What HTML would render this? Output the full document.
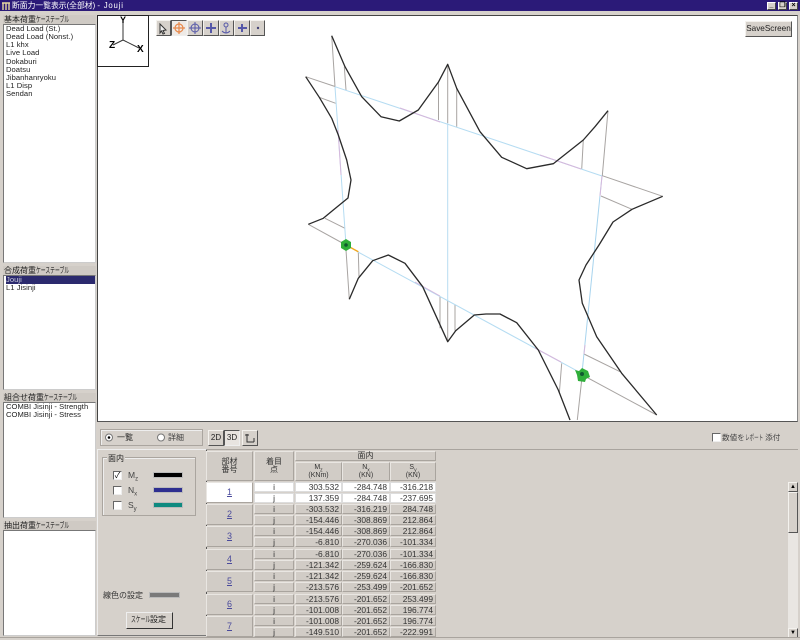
<!DOCTYPE html>
<html><head><meta charset="utf-8"><style>
html,body{margin:0;padding:0;width:800px;height:640px;overflow:hidden;background:#d6d1cb}
body{position:relative;font-family:"Liberation Sans","Noto Sans CJK JP",sans-serif;font-size:9px;color:#222;filter:blur(.3px)}
div{position:absolute;box-sizing:border-box;white-space:nowrap}
.k{display:inline-block;transform:scaleX(.6);transform-origin:left center}
.title{left:0;top:0;width:800px;height:11px;background:#2b1a78;color:#fff;font-size:7.8px;line-height:11px;padding-left:12px}
.wb{top:2px;width:9px;height:8px;background:#d6d1cb;border:1px solid;border-color:#fff #444 #444 #fff;font-size:7px;line-height:6px;text-align:center;color:#000;font-weight:bold}
.hd{left:3px;width:93px;height:9px;background:#cfcac4;font-size:8px;line-height:9px;padding-left:1px;color:#222}
.ls{left:3px;width:93px;background:#fff;border:1px solid;border-color:#777 #ccc #ccc #777;font-size:7.6px;line-height:8.15px;letter-spacing:.05px;padding:0 0 0 2px;overflow:hidden}
.ls span{display:block;height:8.15px}
.btn{background:#d6d1cb;border:1px solid;border-color:#f4f2ee #555 #555 #f4f2ee;text-align:center}
.grp{border:1px solid #aaa59f;box-shadow:inset 1px 1px 0 #eee}
.cb{width:9px;height:9px;background:#fff;border:1px solid;border-color:#666 #eee #eee #666;font-size:8px;line-height:7px;text-align:center;color:#000}
.c{height:10px;background:#d1ccc6;border:1px solid;border-color:#e9e6e2 #a9a49e #a9a49e #e9e6e2;font-size:8.4px;line-height:8.5px;text-align:right;padding-right:2px;color:#333}
.c.w{background:#fff;border-color:#ddd}
.c.m{text-align:center;padding:0}
.n{left:206px;width:47px;height:21px;background:#d1ccc6;border:1px solid;border-color:#e9e6e2 #a9a49e #a9a49e #e9e6e2;color:#4a4a9c;text-align:center;line-height:19px;font-size:9px;text-decoration:underline}
.h{background:#d1ccc6;border:1px solid;border-color:#e9e6e2 #a9a49e #a9a49e #e9e6e2;text-align:center;font-size:8px;line-height:8px;color:#333}
.sw{height:6px;left:153px;width:30px;border:1px solid #bbb}
svg{position:absolute}
</style></head><body>
<div class="title">断面力一覧表示(全部材) <span style="letter-spacing:.8px">- Jouji</span></div>
<svg style="left:1px;top:1px" width="10" height="10"><path d="M1 2h8M2 2v7M8 2v7M5 2v7" stroke="#e8d8a0" stroke-width="1.4" fill="none"/></svg>
<div class="wb" style="left:767px">_</div><div class="wb" style="left:778px">❐</div><div class="wb" style="left:789px">×</div>

<div class="hd" style="top:15px">基本荷重<span class="k">ケーステーブル</span></div>
<div class="ls" style="top:24px;height:239px"><span>Dead Load (St.)</span><span>Dead Load (Nonst.)</span><span>L1 khx</span><span>Live Load</span><span>Dokaburi</span><span>Doatsu</span><span>Jibanhanryoku</span><span>L1 Disp</span><span>Sendan</span></div>
<div class="hd" style="top:266px">合成荷重<span class="k">ケーステーブル</span></div>
<div class="ls" style="top:275px;height:115px"><span style="background:#2b2a6e;color:#ccd">Jouji</span><span>L1 Jisinji</span></div>
<div class="hd" style="top:393px">組合せ荷重<span class="k">ケーステーブル</span></div>
<div class="ls" style="top:402px;height:116px"><span>COMBI Jisinji - Strength</span><span>COMBI Jisinji - Stress</span></div>
<div class="hd" style="top:521px">抽出荷重<span class="k">ケーステーブル</span></div>
<div class="ls" style="top:530px;height:106px"></div>

<div style="left:97px;top:15px;width:701px;height:407px;background:#fff;border:1px solid;border-color:#444 #888 #555 #444"></div>
<div style="left:97px;top:15px;width:52px;height:52px;background:#fff;border:1px solid #222"></div>
<svg style="left:97px;top:15px" width="52" height="52"><path d="M26 25V5M26 25L42 33M26 25L16 30" stroke="#333" fill="none"/><text x="23" y="8" font-size="9" font-weight="bold" font-family="Liberation Sans" fill="#000">Y</text><text x="40" y="37" font-size="10" font-weight="bold" font-family="Liberation Sans" fill="#000">X</text><text x="12" y="33" font-size="10" font-weight="bold" font-family="Liberation Sans" fill="#000">Z</text></svg>

<svg style="left:0;top:0" width="800" height="422" fill="none" stroke-linejoin="round">
<g stroke="#a8a4a2" stroke-width="1">
<path d="M331.7 35.7L335 86.7M305.7 76.7L335 86.5M319.3 97.3L335.7 103.3M344.3 66.7L346 90M438.5 82.3V120M447.7 64.3V123M456.7 88.3V126.7M583.3 140L581.7 169.3M608 110.7L602.3 175.7L662.7 196.3M632 209.3L601 196M308.3 224.3L346 245M325 218.3L345 228.3M346 250L349.3 299.3M358.3 251.7L359 276.7M440 296.7V328.3M447.7 300.7V341.7M455 305V330.7M561.7 363.3L559.3 393.3M584 354L620 371.7M588 378L656.7 415M581.7 380L577.3 420"/>
</g>
<path d="M335 86.7L480 135L602 176" stroke="#b5dcf2"/>
<path d="M400 108L440 122M540 155L581 169" stroke="#d6b8dc"/>
<path d="M335 87L346 245" stroke="#b5dcf2"/><path d="M338 130L341 175" stroke="#d6b8dc"/>
<path d="M447.7 123V300.7" stroke="#b8dcf2"/>
<path d="M602 176L582 373" stroke="#a8d4ee"/><path d="M602 176L600 196M585 345L584 354" stroke="#d6b8dc"/>
<path d="M358 252L576.7 370.7" stroke="#b5dcf2"/><path d="M415 282L440 296M535 348L561 362" stroke="#d6b8dc"/>
<path d="M346 245L358.3 251.7" stroke="#f0a820" stroke-width="1.4"/>
<g stroke="#2a2a2a" stroke-width="1.3">
<path d="M331.7 35.7L345 66.7L361.7 96.7L381 116.7L399.3 121L418.3 110L438.3 82.3L447.7 64.3L456.7 88.3L480 131.7L501.7 157.3L526.7 168.7L553.3 163.7L583.3 140L595 126.7L608 110.7"/>
<path d="M662.7 196.3L632 209.3L613 222L599 245L586 265L579 280L582.3 303.3L596.7 336.7L621.7 373.3L656.7 415"/>
<path d="M305.7 76.7L319.3 97.3L331.7 118.3L338.3 135L346.7 160L351 180L348 198L333.3 210L323.3 218.3L308.3 224.3"/>
<path d="M349.3 299.3L358.3 278.3L372.7 260.7L388.3 255L405 263.3L422.7 286.7L447.7 341.7L455.7 330.7L474.3 315L486 314L500 314L516.7 322.7L538.3 350L558.3 390L570 420"/>
</g>
<path d="M346 239l5 3v6l-5 3l-5-3v-6z" fill="#2fae3a"/><circle cx="346" cy="245" r="1.8" fill="#0f5a30"/>
<path d="M575 370l4 1l3-3l6 3l2 6l-4 2l-1 3l-7-1l-1-6z" fill="#2fae3a"/><circle cx="582" cy="374" r="2" fill="#0f5a30"/>
</svg>

<div class="btn" style="left:156px;top:20px;width:15px;height:16px"></div>
<div class="btn" style="left:171px;top:20px;width:16px;height:16px;background:#eeeae6;border-color:#555 #eee #eee #555"></div>
<div class="btn" style="left:187px;top:20px;width:16px;height:16px"></div>
<div class="btn" style="left:203px;top:20px;width:16px;height:16px"></div>
<div class="btn" style="left:219px;top:20px;width:15px;height:16px"></div>
<div class="btn" style="left:234px;top:20px;width:16px;height:16px"></div>
<div class="btn" style="left:250px;top:20px;width:15px;height:16px"></div>
<svg style="left:156px;top:20px" width="110" height="16" fill="none">
<path d="M4 4l6 6l-3 .5l1.5 3l-1.5 .5l-1.5-3l-1.5 2z" stroke="#333" fill="#eee"/>
<g stroke="#e8884a" stroke-width="1.2"><circle cx="23" cy="8" r="4"/><path d="M23 2v12M17 8h12"/></g>
<g stroke="#5558a8"><circle cx="39" cy="8" r="4"/><path d="M39 2v12M33 8h12"/><path d="M55 3v10M50 8h10" stroke-width="2"/><circle cx="70" cy="5" r="2"/><path d="M70 7v6M66 11q4 4 8 0"/><path d="M82 8h9M86 4v8" stroke-width="2"/></g>
<circle cx="102" cy="8" r="1.2" fill="#447"/>
</svg>
<div class="btn" style="left:745px;top:21px;width:47px;height:16px;line-height:13px;font-size:8.2px">SaveScreen</div>

<div style="left:97px;top:421px;width:701px;height:29px;border-bottom:1px solid #a9a49e"></div>
<div class="grp" style="left:100px;top:429px;width:103px;height:17px"></div>
<svg style="left:100px;top:429px" width="70" height="17"><circle cx="9" cy="8.5" r="3.5" fill="#fff" stroke="#777"/><circle cx="9" cy="8.5" r="1.3" fill="#000"/><circle cx="61" cy="8.5" r="3.5" fill="#fff" stroke="#777"/></svg>
<div style="left:117px;top:432px;font-size:8px;line-height:11px;letter-spacing:0">一覧</div>
<div style="left:168px;top:432px;font-size:8px;line-height:11px;color:#444">詳細</div>
<div class="btn" style="left:208px;top:430px;width:16px;height:16px;line-height:13px;font-size:8px">2D</div>
<div class="btn" style="left:224px;top:430px;width:16px;height:16px;line-height:14px;font-size:8px;background:#e8e4e0;border-color:#555 #eee #eee #555">3D</div>
<div class="btn" style="left:242px;top:430px;width:16px;height:16px"></div>
<svg style="left:242px;top:430px" width="16" height="16" fill="none"><path d="M5 4v8h7M3 5h4M12 8v4" stroke="#333"/></svg>
<div class="cb" style="left:712px;top:433px"></div>
<div style="left:722px;top:432px;font-size:7.6px;line-height:11px;color:#444">数値を<span class="k" style="margin-right:-10px">レポート</span>添付</div>

<div style="left:97px;top:449px;width:110px;height:187px;border:1px solid;border-color:#eee #555 #777 #eee"></div>
<div class="grp" style="left:102px;top:457px;width:94px;height:59px"></div>
<div style="left:107px;top:453px;background:#d6d1cb;padding:0 1px;font-size:8px;line-height:11px">面内</div>
<div class="cb" style="left:113px;top:471px">✓</div><div style="left:128px;top:470px;line-height:10px;font-size:8.5px;color:#444">M<sub style="font-size:6px;line-height:0">z</sub></div><div class="sw" style="top:472px;background:#000"></div>
<div class="cb" style="left:113px;top:486px"></div><div style="left:128px;top:485px;line-height:10px;font-size:8.5px;color:#444">N<sub style="font-size:6px;line-height:0">x</sub></div><div class="sw" style="top:487px;background:#2f2f90"></div>
<div class="cb" style="left:113px;top:501px"></div><div style="left:128px;top:500px;line-height:10px;font-size:8.5px;color:#444">S<sub style="font-size:6px;line-height:0">y</sub></div><div class="sw" style="top:502px;background:#0f8a80"></div>
<div style="left:103px;top:590px;font-size:8px;line-height:11px;color:#333">線色の設定</div>
<div class="sw" style="left:149px;top:592px;width:31px;background:#7a7a7a"></div>
<div class="btn" style="left:126px;top:612px;width:47px;height:17px;font-size:8px;line-height:14px;border-color:#eee #333 #333 #eee;text-align:left;padding-left:4px"><span class="k" style="margin-right:-13px">スケール</span>設定</div>

<div class="h" style="left:206px;top:451px;width:47px;height:30px;padding-top:6px">部材<br>番号</div>
<div class="h" style="left:254px;top:451px;width:40px;height:30px;padding-top:6px">着目<br>点</div>
<div class="h" style="left:295px;top:451px;width:141px;height:10px;line-height:8px">面内</div>
<div class="h" style="left:295px;top:462px;width:47px;height:19px;font-size:7px;padding-top:1px">M<sub style="font-size:5px;line-height:0">z</sub><br>(KNm)</div>
<div class="h" style="left:342px;top:462px;width:48px;height:19px;font-size:7px;padding-top:1px">N<sub style="font-size:5px;line-height:0">x</sub><br>(KN)</div>
<div class="h" style="left:390px;top:462px;width:46px;height:19px;font-size:7px;padding-top:1px">S<sub style="font-size:5px;line-height:0">y</sub><br>(KN)</div>

<div class="n" style="top:482px;background:#fff">1</div><div class="n" style="top:504px">2</div><div class="n" style="top:526px">3</div><div class="n" style="top:549px">4</div><div class="n" style="top:571px">5</div><div class="n" style="top:594px">6</div><div class="n" style="top:616px">7</div>

<div class="c w m" style="left:254px;top:482px;width:40px">i</div><div class="c w" style="left:295px;top:482px;width:47px">303.532</div><div class="c w" style="left:342px;top:482px;width:48px">-284.748</div><div class="c w" style="left:390px;top:482px;width:46px">-316.218</div>
<div class="c w m" style="left:254px;top:493px;width:40px">j</div><div class="c w" style="left:295px;top:493px;width:47px">137.359</div><div class="c w" style="left:342px;top:493px;width:48px">-284.748</div><div class="c w" style="left:390px;top:493px;width:46px">-237.695</div>
<div class="c m" style="left:254px;top:504px;width:40px">i</div><div class="c" style="left:295px;top:504px;width:47px">-303.532</div><div class="c" style="left:342px;top:504px;width:48px">-316.219</div><div class="c" style="left:390px;top:504px;width:46px">284.748</div>
<div class="c m" style="left:254px;top:515px;width:40px">j</div><div class="c" style="left:295px;top:515px;width:47px">-154.446</div><div class="c" style="left:342px;top:515px;width:48px">-308.869</div><div class="c" style="left:390px;top:515px;width:46px">212.864</div>
<div class="c m" style="left:254px;top:526px;width:40px">i</div><div class="c" style="left:295px;top:526px;width:47px">-154.446</div><div class="c" style="left:342px;top:526px;width:48px">-308.869</div><div class="c" style="left:390px;top:526px;width:46px">212.864</div>
<div class="c m" style="left:254px;top:537px;width:40px">j</div><div class="c" style="left:295px;top:537px;width:47px">-6.810</div><div class="c" style="left:342px;top:537px;width:48px">-270.036</div><div class="c" style="left:390px;top:537px;width:46px">-101.334</div>
<div class="c m" style="left:254px;top:549px;width:40px">i</div><div class="c" style="left:295px;top:549px;width:47px">-6.810</div><div class="c" style="left:342px;top:549px;width:48px">-270.036</div><div class="c" style="left:390px;top:549px;width:46px">-101.334</div>
<div class="c m" style="left:254px;top:560px;width:40px">j</div><div class="c" style="left:295px;top:560px;width:47px">-121.342</div><div class="c" style="left:342px;top:560px;width:48px">-259.624</div><div class="c" style="left:390px;top:560px;width:46px">-166.830</div>
<div class="c m" style="left:254px;top:571px;width:40px">i</div><div class="c" style="left:295px;top:571px;width:47px">-121.342</div><div class="c" style="left:342px;top:571px;width:48px">-259.624</div><div class="c" style="left:390px;top:571px;width:46px">-166.830</div>
<div class="c m" style="left:254px;top:582px;width:40px">j</div><div class="c" style="left:295px;top:582px;width:47px">-213.576</div><div class="c" style="left:342px;top:582px;width:48px">-253.499</div><div class="c" style="left:390px;top:582px;width:46px">-201.652</div>
<div class="c m" style="left:254px;top:594px;width:40px">i</div><div class="c" style="left:295px;top:594px;width:47px">-213.576</div><div class="c" style="left:342px;top:594px;width:48px">-201.652</div><div class="c" style="left:390px;top:594px;width:46px">253.499</div>
<div class="c m" style="left:254px;top:605px;width:40px">j</div><div class="c" style="left:295px;top:605px;width:47px">-101.008</div><div class="c" style="left:342px;top:605px;width:48px">-201.652</div><div class="c" style="left:390px;top:605px;width:46px">196.774</div>
<div class="c m" style="left:254px;top:616px;width:40px">i</div><div class="c" style="left:295px;top:616px;width:47px">-101.008</div><div class="c" style="left:342px;top:616px;width:48px">-201.652</div><div class="c" style="left:390px;top:616px;width:46px">196.774</div>
<div class="c m" style="left:254px;top:627px;width:40px">j</div><div class="c" style="left:295px;top:627px;width:47px">-149.510</div><div class="c" style="left:342px;top:627px;width:48px">-201.652</div><div class="c" style="left:390px;top:627px;width:46px">-222.991</div>

<div style="left:788px;top:482px;width:10px;height:155px;background:#e9e6e2"></div>
<div class="btn" style="left:788px;top:482px;width:10px;height:10px;font-size:6px;line-height:8px;color:#000">▲</div>
<div class="btn" style="left:788px;top:492px;width:10px;height:41px"></div>
<div class="btn" style="left:788px;top:628px;width:10px;height:10px;font-size:6px;line-height:8px;color:#000">▼</div>
<div style="left:0;top:637px;width:800px;height:3px;background:#d6d1cb;border-top:1px solid #a9a49e"></div>
</body></html>
